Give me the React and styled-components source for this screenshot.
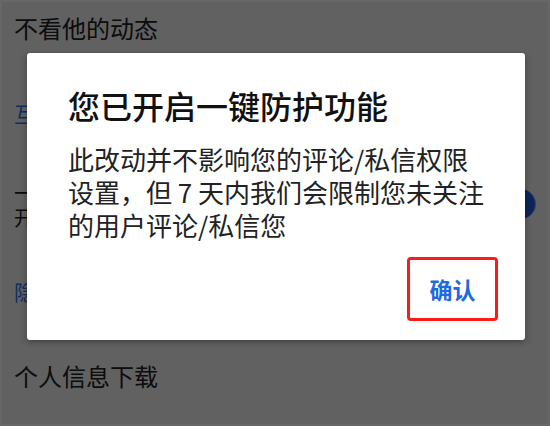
import React from 'react'
import styled, { createGlobalStyle } from 'styled-components'

const GlobalStyle = createGlobalStyle`
    html, body {
        margin: 0;
        padding: 0;
        background: #ffffff;
    }
    body {
        font-family: "Noto Sans CJK SC", "Noto Sans", sans-serif;
    }
`

const Page = styled.div`
    position: relative;
    width: 550px;
    height: 426px;
    overflow: hidden;
    background: #ffffff;
`

const List = styled.div`
    display: flex;
    flex-direction: column;
    padding: 0 14px;
`

const Row = styled.div`
    display: flex;
    align-items: center;
    justify-content: space-between;
    height: ${({ h }) => h}px;
`

const RowText = styled.div`
    display: flex;
    flex-direction: column;
    gap: 2px;
`

const Label = styled.div`
    font-size: ${({ size }) => size || 24}px;
    line-height: 1.2;
    color: ${({ link }) => (link ? '#2f78ff' : '#222')};
    white-space: nowrap;
`

const Switch = styled.div`
    width: 52px;
    height: 30px;
    border-radius: 15px;
    background: #7fb0ff;
    display: flex;
    align-items: center;
    justify-content: flex-end;
    padding: 0 1px;
    box-sizing: border-box;
`

const Knob = styled.div`
    width: 30px;
    height: 30px;
    border-radius: 50%;
    background: #2260e8;
`

const Overlay = styled.div`
    position: absolute;
    inset: 0;
    background: rgba(0, 0, 0, 0.62);
    border: 2px solid rgba(255, 255, 255, 0.04);
    box-sizing: border-box;
`

const Dialog = styled.div`
    position: absolute;
    left: 27px;
    top: 53px;
    width: 498px;
    height: 287px;
    box-sizing: border-box;
    background: #fff;
    border-radius: 3px;
    box-shadow: 0 2px 6px rgba(0, 0, 0, 0.35);
    padding: 31px 27px 19px 41px;
    display: flex;
    flex-direction: column;
`

const Title = styled.div`
    font-size: 32px;
    font-weight: 500;
    line-height: 42px;
    color: #111;
`

const Message = styled.div`
    margin-top: 16px;
    max-width: 420px;
    font-size: 26px;
    line-height: 33px;
    color: #222;
`

const Actions = styled.div`
    margin-top: auto;
    display: flex;
    justify-content: flex-end;
`

const ConfirmButton = styled.button`
    width: 91px;
    height: 64px;
    box-sizing: border-box;
    border: 3px solid #ff1a1a;
    border-radius: 4px;
    background: #fff;
    color: #1f6ae0;
    font-family: inherit;
    font-size: 23px;
    font-weight: 700;
    cursor: pointer;
    padding: 0;
`

const App = () => {
    return (
        <Page>
            <GlobalStyle />
            <List>
                <Row h={56}>
                    <Label>不看他的动态</Label>
                </Row>
                <Row h={116}>
                    <Label link size={21}>互动权限设置</Label>
                </Row>
                <Row h={64}>
                    <RowText>
                        <Label size={22}>一键防护</Label>
                        <Label size={20}>开启后将限制未关注用户的互动</Label>
                    </RowText>
                    <Switch><Knob /></Switch>
                </Row>
                <Row h={112}>
                    <Label link size={21}>隐私设置说明</Label>
                </Row>
                <Row h={56}>
                    <Label>个人信息下载</Label>
                </Row>
            </List>
            <Overlay />
            <Dialog>
                <Title>您已开启一键防护功能</Title>
                <Message>此改动并不影响您的评论/私信权限设置，但 7 天内我们会限制您未关注的用户评论/私信您</Message>
                <Actions>
                    <ConfirmButton>确认</ConfirmButton>
                </Actions>
            </Dialog>
        </Page>
    )
}

export default App
